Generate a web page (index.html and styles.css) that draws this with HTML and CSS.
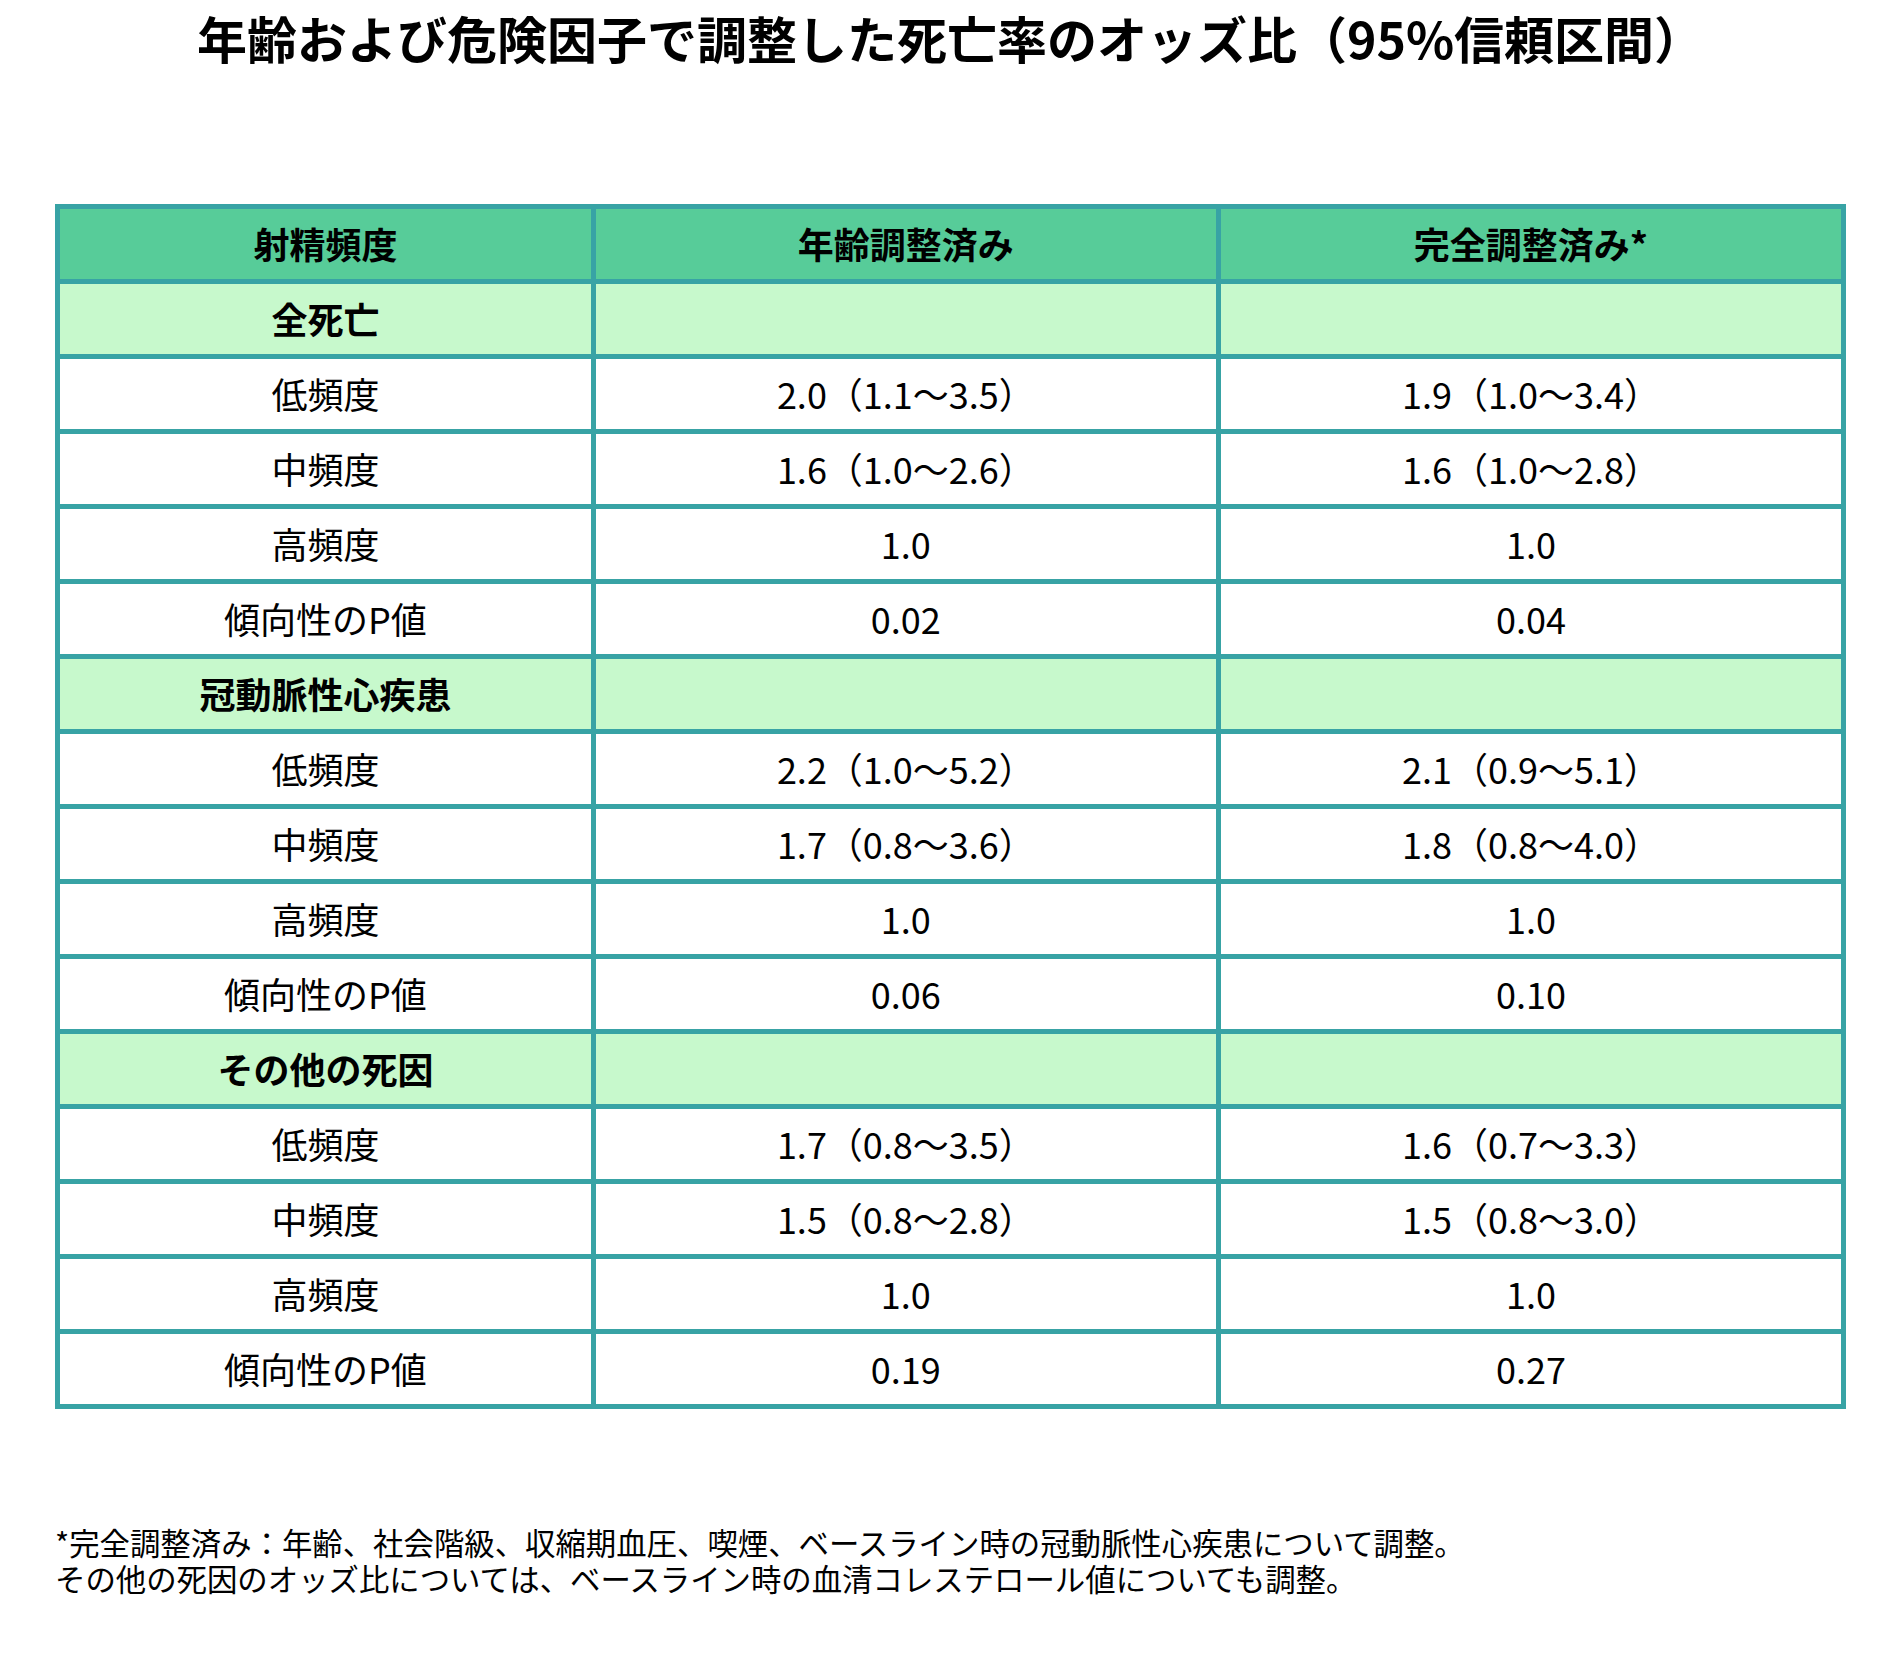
FILE: index.html
```html
<!DOCTYPE html>
<html lang="ja">
<head>
<meta charset="utf-8">
<title>年齢および危険因子で調整した死亡率のオッズ比</title>
<link rel="stylesheet" href="styles.css">
</head>
<body>
<div class="page">
  <h1 class="title">年齢および危険因子で調整した死亡率のオッズ比（95%信頼区間）</h1>
  <table class="odds">
    <colgroup>
      <col class="c1">
      <col class="c2">
      <col class="c3">
    </colgroup>
    <thead>
      <tr><th>射精頻度</th><th>年齢調整済み</th><th>完全調整済み*</th></tr>
    </thead>
    <tbody>
      <tr class="group"><td>全死亡</td><td></td><td></td></tr>
      <tr><td>低頻度</td><td>2.0（1.1～3.5）</td><td>1.9（1.0～3.4）</td></tr>
      <tr><td>中頻度</td><td>1.6（1.0～2.6）</td><td>1.6（1.0～2.8）</td></tr>
      <tr><td>高頻度</td><td>1.0</td><td>1.0</td></tr>
      <tr><td>傾向性のP値</td><td>0.02</td><td>0.04</td></tr>
      <tr class="group"><td>冠動脈性心疾患</td><td></td><td></td></tr>
      <tr><td>低頻度</td><td>2.2（1.0～5.2）</td><td>2.1（0.9～5.1）</td></tr>
      <tr><td>中頻度</td><td>1.7（0.8～3.6）</td><td>1.8（0.8～4.0）</td></tr>
      <tr><td>高頻度</td><td>1.0</td><td>1.0</td></tr>
      <tr><td>傾向性のP値</td><td>0.06</td><td>0.10</td></tr>
      <tr class="group"><td>その他の死因</td><td></td><td></td></tr>
      <tr><td>低頻度</td><td>1.7（0.8～3.5）</td><td>1.6（0.7～3.3）</td></tr>
      <tr><td>中頻度</td><td>1.5（0.8～2.8）</td><td>1.5（0.8～3.0）</td></tr>
      <tr><td>高頻度</td><td>1.0</td><td>1.0</td></tr>
      <tr><td>傾向性のP値</td><td>0.19</td><td>0.27</td></tr>
    </tbody>
  </table>
  <p class="note">*完全調整済み：年齢、社会階級、収縮期血圧、喫煙、ベースライン時の冠動脈性心疾患について調整。<br>その他の死因のオッズ比については、ベースライン時の血清コレステロール値についても調整。</p>
</div>
</body>
</html>
```
FILE: styles.css
```css
html, body {
  margin: 0;
  padding: 0;
  background: #ffffff;
}

body {
  font-family: "Noto Sans CJK JP", "Noto Sans", sans-serif;
  color: #000000;
}

.page {
  padding: 1px 54px 0 55px;
}

.title {
  margin: 0;
  font-size: 50px;
  font-weight: 700;
  text-align: center;
}

.odds {
  margin-top: 131px;
  width: 100%;
  border-collapse: collapse;
  table-layout: fixed;
  font-size: 36px;
}

.c1 { width: 30%; }
.c2 { width: 35%; }
.c3 { width: 35%; }

.odds th,
.odds td {
  border: 5px solid #38a3a5;
  height: 70px;
  padding: 0;
  text-align: center;
  vertical-align: middle;
  line-height: 1.2;
}

.odds th {
  background: #57cc99;
  font-weight: 700;
}

.odds .group td {
  background: #c7f9cc;
  font-weight: 700;
}

.odds td {
  background: #ffffff;
  font-weight: 400;
}

.note {
  margin: 115px 0 0;
  font-size: 30.4px;
  line-height: 1.2;
}
```
